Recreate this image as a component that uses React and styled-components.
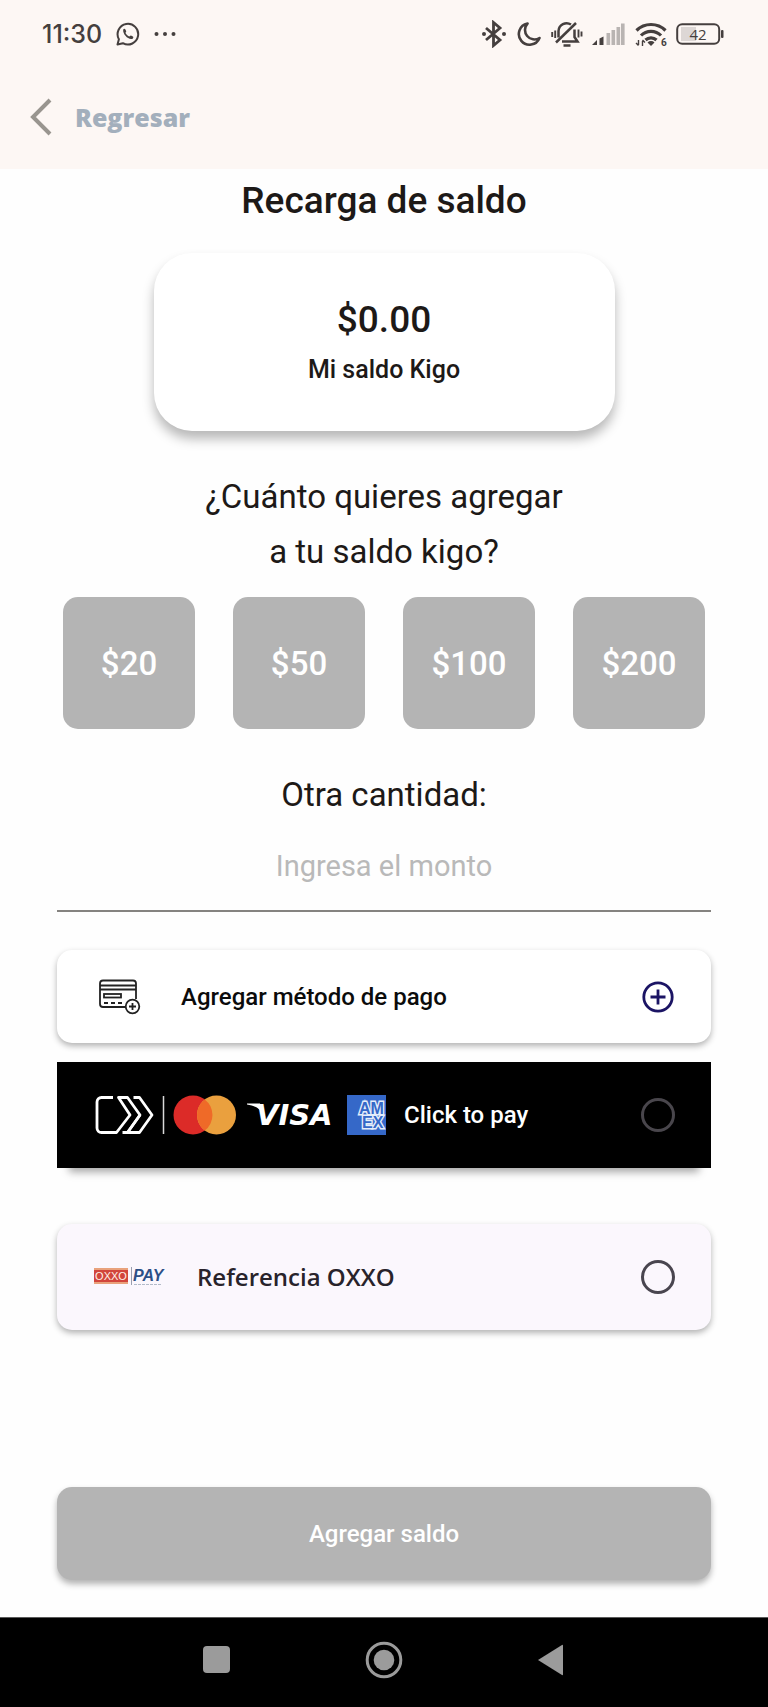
import React, { useState } from 'react'
import styled, { createGlobalStyle } from 'styled-components'

const GlobalStyle = createGlobalStyle`
  * {
    box-sizing:border-box;
  }

  body {
    margin:0;
    background-color:#FEFEFE;
    font-family:Roboto, sans-serif;
    color:#1D1917;
  }

  button, input {
    font-family:inherit;
  }
`;

const Page = styled.div`
  display:flex;
  flex-direction:column;
  min-height:100vh;
`;

const Header = styled.header`
  padding:16px 44px 28px 28px;
  background-color:#FDF7F4;
`;

const StatusBar = styled.div`
  display:flex;
  justify-content:space-between;
  align-items:center;
  height:36px;
  padding-left:14px;
  margin-bottom:41px;
  color:#453F3E;
`;

const StatusGroup = styled.div`
  display:flex;
  align-items:center;
  gap:${props => props.gap}px;
`;

const Clock = styled.span`
  font-family:Inter, sans-serif;
  font-size:25px;
  line-height:32px;
  font-weight:500;
`;

const BackButton = styled.button`
  display:flex;
  align-items:center;
  gap:23px;
  height:48px;
  padding:0;
  border:none;
  background:none;
  color:#A3AFBC;
  font-family:'Open Sans', sans-serif;
  font-size:25px;
  font-weight:800;
`;

const Main = styled.main`
  flex:1;
  display:flex;
  flex-direction:column;
  padding:8px 57px 37px;
`;

const Title = styled.h1`
  margin:0;
  font-size:37px;
  line-height:48px;
  font-weight:500;
  text-align:center;
`;

const BalanceCard = styled.section`
  width:461px;
  max-width:100%;
  margin:28px auto 38px;
  padding:41px 24px;
  border-radius:38px;
  background-color:#FFFFFF;
  box-shadow:0 8px 12px rgba(0, 0, 0, 0.28);
  text-align:center;
`;

const Amount = styled.p`
  margin:0;
  font-size:37px;
  line-height:52px;
  font-weight:500;
`;

const AmountLabel = styled.p`
  margin:4px 0 0;
  font-size:25px;
  line-height:40px;
  font-weight:500;
`;

const Question = styled.h2`
  margin:0;
  font-size:33px;
  line-height:55px;
  font-weight:400;
  text-align:center;
`;

const AmountGrid = styled.div`
  display:grid;
  grid-template-columns:repeat(4, 1fr);
  gap:38px;
  padding:0 6px;
  margin:18px 0 38px;
`;

const AmountButton = styled.button`
  aspect-ratio:1;
  padding:0;
  border:none;
  border-radius:15px;
  background-color:#B4B4B4;
  color:#FFFFFF;
  font-size:33px;
  font-weight:500;
`;

const OtherLabel = styled.label`
  font-size:33px;
  line-height:56px;
  text-align:center;
`;

const OtherInput = styled.input`
  width:100%;
  height:89px;
  padding:0 0 2px;
  border:none;
  border-bottom:2px solid #858380;
  background:none;
  font-size:29px;
  text-align:center;

  &::placeholder{
    color:#B9B9B9;
    opacity:1;
  }
`;

const Methods = styled.div`
  display:flex;
  flex-direction:column;
  padding-top:38px;
`;

const AddMethod = styled.button`
  display:flex;
  align-items:center;
  gap:38px;
  min-height:93px;
  padding:0 36px;
  margin-bottom:19px;
  border:none;
  border-radius:15px;
  background-color:#FFFFFF;
  box-shadow:0 3px 6px rgba(0, 0, 0, 0.3);
  color:#0B0B0B;
  text-align:left;
`;

const MethodRow = styled.label`
  display:flex;
  align-items:center;
  gap:${props => props.gap}px;
  min-height:106px;
  padding:0 36px;
`;

const ClickRow = styled(MethodRow)`
  margin-bottom:56px;
  background-color:#000000;
  box-shadow:0 16px 8px -12px rgba(0, 0, 0, 0.35);
  color:#FFFFFF;
`;

const OxxoRow = styled(MethodRow)`
  border-radius:15px;
  background-color:#FBF7FD;
  box-shadow:0 3px 6px rgba(0, 0, 0, 0.3);
  color:#28232B;
`;

const Brands = styled.div`
  display:flex;
  align-items:center;
`;

const MethodName = styled.span`
  flex:1;
  font-size:24px;
  line-height:32px;
  font-weight:500;
`;

const OxxoName = styled(MethodName)`
  font-family:'Open Sans', sans-serif;
  font-weight:600;
`;

const Radio = styled.input`
  appearance:none;
  flex:none;
  width:34px;
  height:34px;
  margin:0;
  border:3px solid ${props => props.$ring};
  border-radius:50%;

  &:checked{
    background:radial-gradient(circle, ${props => props.$ring} 45%, transparent 50%);
  }
`;

const SubmitButton = styled.button`
  min-height:93px;
  margin-top:auto;
  border:none;
  border-radius:15px;
  background-color:#B4B4B4;
  box-shadow:0 4px 6px rgba(0, 0, 0, 0.3);
  color:#FFFFFF;
  font-size:24px;
  font-weight:500;
`;

const SystemNav = styled.nav`
  display:flex;
  justify-content:center;
  gap:127px;
  padding:22px 0 27px;
  border-top:1px solid #5A5A5A;
  background-color:#000000;
`;

const NavButton = styled.button`
  display:flex;
  padding:0;
  border:none;
  background:none;
`;

const WhatsappIcon = () => (
  <svg width="24" height="24" viewBox="0 0 24 24" fill="none" stroke="currentColor" strokeWidth="2">
    <path d="M1.500 22.500l1.400-5.300a10.300 10.300 0 1 1 4 4z" strokeLinejoin="round" />
    <path d="M7.200 7.600c.7-1.300 1.800-1.200 2.200-.2l.8 1.900c.2.6-.9 1.300-.7 1.800.8 1.600 2 2.700 3.600 3.400.6.2 1.200-1.200 1.900-.9l1.900.9c.9.5.3 1.900-.7 2.400-3.700 1.300-9.700-4.500-9-9.300z" fill="currentColor" stroke="none" />
  </svg>
)

const DotsIcon = () => (
  <svg width="22" height="6" viewBox="0 0 22 6" fill="currentColor">
    <circle cx="2.500" cy="3" r="2" />
    <circle cx="11" cy="3" r="2" />
    <circle cx="19.500" cy="3" r="2" />
  </svg>
)

const BluetoothIcon = () => (
  <svg width="26" height="28" viewBox="0 0 26 28" fill="none" stroke="currentColor" strokeWidth="2.800">
    <path d="M5 8l14 12-6.500 5.500v-23L19 8 5 20" />
    <circle cx="3" cy="14" r="2" fill="currentColor" stroke="none" />
    <circle cx="23" cy="14" r="2" fill="currentColor" stroke="none" />
  </svg>
)

const MoonIcon = () => (
  <svg width="26" height="28" viewBox="0 0 26 28" fill="none" stroke="currentColor" strokeWidth="2.600" strokeLinejoin="round">
    <path d="M11.500 3.500A10.700 10.700 0 1 0 23.500 18 9.500 9.500 0 0 1 11.500 3.500z" />
  </svg>
)

const MuteIcon = () => (
  <svg width="32" height="28" viewBox="0 0 32 28" fill="none" stroke="currentColor" strokeWidth="2.500">
    <path d="M5 22.500L25 3" />
    <path d="M7.500 17.500V11a8.200 8.200 0 0 1 12.500-6.500" />
    <path d="M23.500 9.500v7.500l3 4.500H11" />
    <path d="M12.500 25.500h7" />
    <path d="M1.200 12v5M4.200 10.500v7.500M27.500 9.500v8M30.500 11.500v5" strokeWidth="1.900" />
  </svg>
)

const SignalIcon = () => (
  <svg width="34" height="24" viewBox="0 0 34 24" fill="currentColor">
    <path d="M0 23l5-5v5z" />
    <path d="M7.500 16.500l4-2V23h-4z" />
    <g fill="#B9B4B2">
      <rect x="14.500" y="11" width="3.600" height="12" />
      <rect x="19.500" y="8" width="3.600" height="15" />
      <rect x="24.500" y="5" width="3.600" height="18" />
      <rect x="29" y="1.500" width="3.600" height="21.500" />
    </g>
  </svg>
)

const WifiIcon = () => (
  <svg width="32" height="26" viewBox="0 0 32 26" fill="none" stroke="currentColor" strokeWidth="3.200">
    <path d="M1.500 9.500a20.500 20.500 0 0 1 29 0" />
    <path d="M6 14.500a14 14 0 0 1 20 0" />
    <path d="M10.500 19a8 8 0 0 1 11 0" />
    <path d="M12.500 21.500a5 5 0 0 1 7 0L16 25z" fill="currentColor" stroke="none" />
    <path d="M3.500 19v5M1 22l2.500 2.500M7.500 25v-5M10 21.500L7.500 19" strokeWidth="1.400" />
    <text x="26" y="25" fontSize="10" fontWeight="700" fill="currentColor" stroke="none">6</text>
  </svg>
)

const BatteryIcon = () => (
  <svg width="48" height="24" viewBox="0 0 48 24">
    <rect x="5" y="5" width="15" height="14" fill="#DDD7D5" />
    <rect x="1.200" y="2.200" width="42" height="19.600" rx="5" fill="none" stroke="currentColor" strokeWidth="2" />
    <rect x="45" y="8" width="2.500" height="8" rx="1" fill="currentColor" />
    <text x="22" y="17.500" fontSize="15" textAnchor="middle" fill="currentColor" fontFamily="Open Sans, sans-serif" fontWeight="500">42</text>
  </svg>
)

const BackIcon = () => (
  <svg width="24" height="38" viewBox="0 0 24 38" fill="none" stroke="#99958F" strokeWidth="4">
    <path d="M22 2L5 19l17 17" />
  </svg>
)

const AddCardIcon = () => (
  <svg width="50" height="36" viewBox="0 0 50 36" fill="none" stroke="#222222" strokeWidth="1.800">
    <path d="M33 28H10a3 3 0 0 1-3-3V4.500a3 3 0 0 1 3-3h30a3 3 0 0 1 3 3V20" />
    <path d="M7 6.500h36M7 10.500h36" />
    <rect x="11" y="15" width="17" height="3.500" />
    <path d="M11 24h4M18 24h4M25 24h4" />
    <circle cx="39.500" cy="27.500" r="6.800" />
    <path d="M39.500 24v7M36 27.500h7" />
  </svg>
)

const PlusIcon = () => (
  <svg width="34" height="34" viewBox="0 0 34 34" fill="none" stroke="#1B1464" strokeWidth="2.800">
    <circle cx="17" cy="17" r="14.200" />
    <path d="M17 9.500v15M9.500 17h15" />
  </svg>
)

const ClickMark = () => (
  <svg width="77" height="40" viewBox="0 0 77 40" fill="none" stroke="#FFFFFF" strokeWidth="2.800" strokeLinejoin="round">
    <path d="M20 2.500H8.500A4.500 4.500 0 0 0 4 7v26a4.500 4.500 0 0 0 4.500 4.500h15L37 20 25.500 2.500h9L47 20 34.500 37.500h-5" />
    <path d="M40.500 2.500h6L59 20 46.500 37.500h-12L47 20" />
    <path d="M70.500 1v38" stroke="#D8D8D8" strokeWidth="1.500" />
  </svg>
)

const MastercardMark = () => (
  <svg width="66" height="40" viewBox="0 0 66 40">
    <circle cx="23" cy="20" r="19.500" fill="#DC2B28" />
    <circle cx="46.500" cy="20" r="19.500" fill="#EAA03E" />
    <path d="M34.750 4.450a19.500 19.500 0 0 1 0 31.100a19.500 19.500 0 0 1 0-31.100z" fill="#EF6A28" />
  </svg>
)

const VisaMark = () => (
  <svg width="111" height="40" viewBox="0 0 111 40" fill="#FFFFFF">
    <path d="M11 8.500h13l3.500 11C24 13 18 10.500 11 9.500z" />
    <text x="20" y="30" fontFamily="DejaVu Sans, sans-serif" fontSize="29" fontWeight="700" fontStyle="italic">VISA</text>
  </svg>
)

const AmexMark = () => (
  <svg width="40" height="40" viewBox="0 0 40 40">
    <rect width="39" height="40" fill="#3568C8" />
    <text fontFamily="Liberation Sans, sans-serif" fontSize="16" fontWeight="700" fill="#3568C8" stroke="#E4EDFA" strokeWidth="2.800" paintOrder="stroke">
      <tspan x="12" y="19">AM</tspan>
      <tspan x="15" y="33">EX</tspan>
    </text>
    <rect x="39" width="1" height="40" fill="#000000" />
  </svg>
)

const OxxoMark = () => (
  <svg width="74" height="22" viewBox="0 0 74 22">
    <rect x="1" y="2" width="34" height="16" fill="#E9A27C" />
    <rect x="1" y="4" width="34" height="12" fill="#D2453C" />
    <text x="18" y="14" textAnchor="middle" fontFamily="Liberation Sans, sans-serif" fontSize="11" fill="#FFF0E8">OXXO</text>
    <path d="M38.500 1v18" stroke="#9A9FB0" strokeWidth="1" />
    <text x="40" y="15" fontFamily="Liberation Sans, sans-serif" fontSize="16" fontWeight="700" fontStyle="italic" fill="#2C4F86">PAY</text>
    <path d="M41 18.500h28" stroke="#B3BBC9" strokeWidth="1" strokeDasharray="3 1" />
  </svg>
)

const amounts = [20, 50, 100, 200]

// Recarga de saldo
const App = () => {
  const [amount, setAmount] = useState('')
  const [method, setMethod] = useState('')

  return (
    <>
      <GlobalStyle />
      <Page>
        <Header>
          <StatusBar>
            <StatusGroup gap={14}>
              <Clock>11:30</Clock>
              <WhatsappIcon />
              <DotsIcon />
            </StatusGroup>
            <StatusGroup gap={9}>
              <BluetoothIcon />
              <MoonIcon />
              <MuteIcon />
              <SignalIcon />
              <WifiIcon />
              <BatteryIcon />
            </StatusGroup>
          </StatusBar>
          <BackButton type="button">
            <BackIcon />
            Regresar
          </BackButton>
        </Header>
        <Main>
          <Title>Recarga de saldo</Title>
          <BalanceCard>
            <Amount>$0.00</Amount>
            <AmountLabel>Mi saldo Kigo</AmountLabel>
          </BalanceCard>
          <Question>
            ¿Cuánto quieres agregar<br />a tu saldo kigo?
          </Question>
          <AmountGrid>
            {amounts.map((value) => (
              <AmountButton type="button" key={value} onClick={() => setAmount(String(value))}>
                ${value}
              </AmountButton>
            ))}
          </AmountGrid>
          <OtherLabel htmlFor="monto">Otra cantidad:</OtherLabel>
          <OtherInput
            id="monto"
            inputMode="decimal"
            placeholder="Ingresa el monto"
            value={amount}
            onChange={(e) => setAmount(e.target.value)}
          />
          <Methods>
            <AddMethod type="button">
              <AddCardIcon />
              <MethodName>Agregar método de pago</MethodName>
              <PlusIcon />
            </AddMethod>
            <ClickRow gap={17}>
              <Brands>
                <ClickMark />
                <MastercardMark />
                <VisaMark />
                <AmexMark />
              </Brands>
              <MethodName>Click to pay</MethodName>
              <Radio type="radio" name="metodo" $ring="#49464C" checked={method === 'click'} onChange={() => setMethod('click')} />
            </ClickRow>
            <OxxoRow gap={30}>
              <OxxoMark />
              <OxxoName>Referencia OXXO</OxxoName>
              <Radio type="radio" name="metodo" $ring="#49454F" checked={method === 'oxxo'} onChange={() => setMethod('oxxo')} />
            </OxxoRow>
          </Methods>
          <SubmitButton type="button">Agregar saldo</SubmitButton>
        </Main>
        <SystemNav>
          <NavButton type="button" aria-label="Recientes">
            <svg width="40" height="40" viewBox="0 0 40 40" fill="#9B9B9B">
              <rect x="6" y="6" width="27" height="27" rx="4" />
            </svg>
          </NavButton>
          <NavButton type="button" aria-label="Inicio">
            <svg width="40" height="40" viewBox="0 0 40 40" fill="#9B9B9B">
              <circle cx="20" cy="20" r="16.800" fill="none" stroke="#9B9B9B" strokeWidth="3" />
              <circle cx="20" cy="20" r="10.300" />
            </svg>
          </NavButton>
          <NavButton type="button" aria-label="Atrás">
            <svg width="40" height="40" viewBox="0 0 40 40" fill="#9B9B9B">
              <path d="M7 20L31 5q1-.5 1 .7v28.600q0 1.200-1 .7z" />
            </svg>
          </NavButton>
        </SystemNav>
      </Page>
    </>
  )
}

export default App
